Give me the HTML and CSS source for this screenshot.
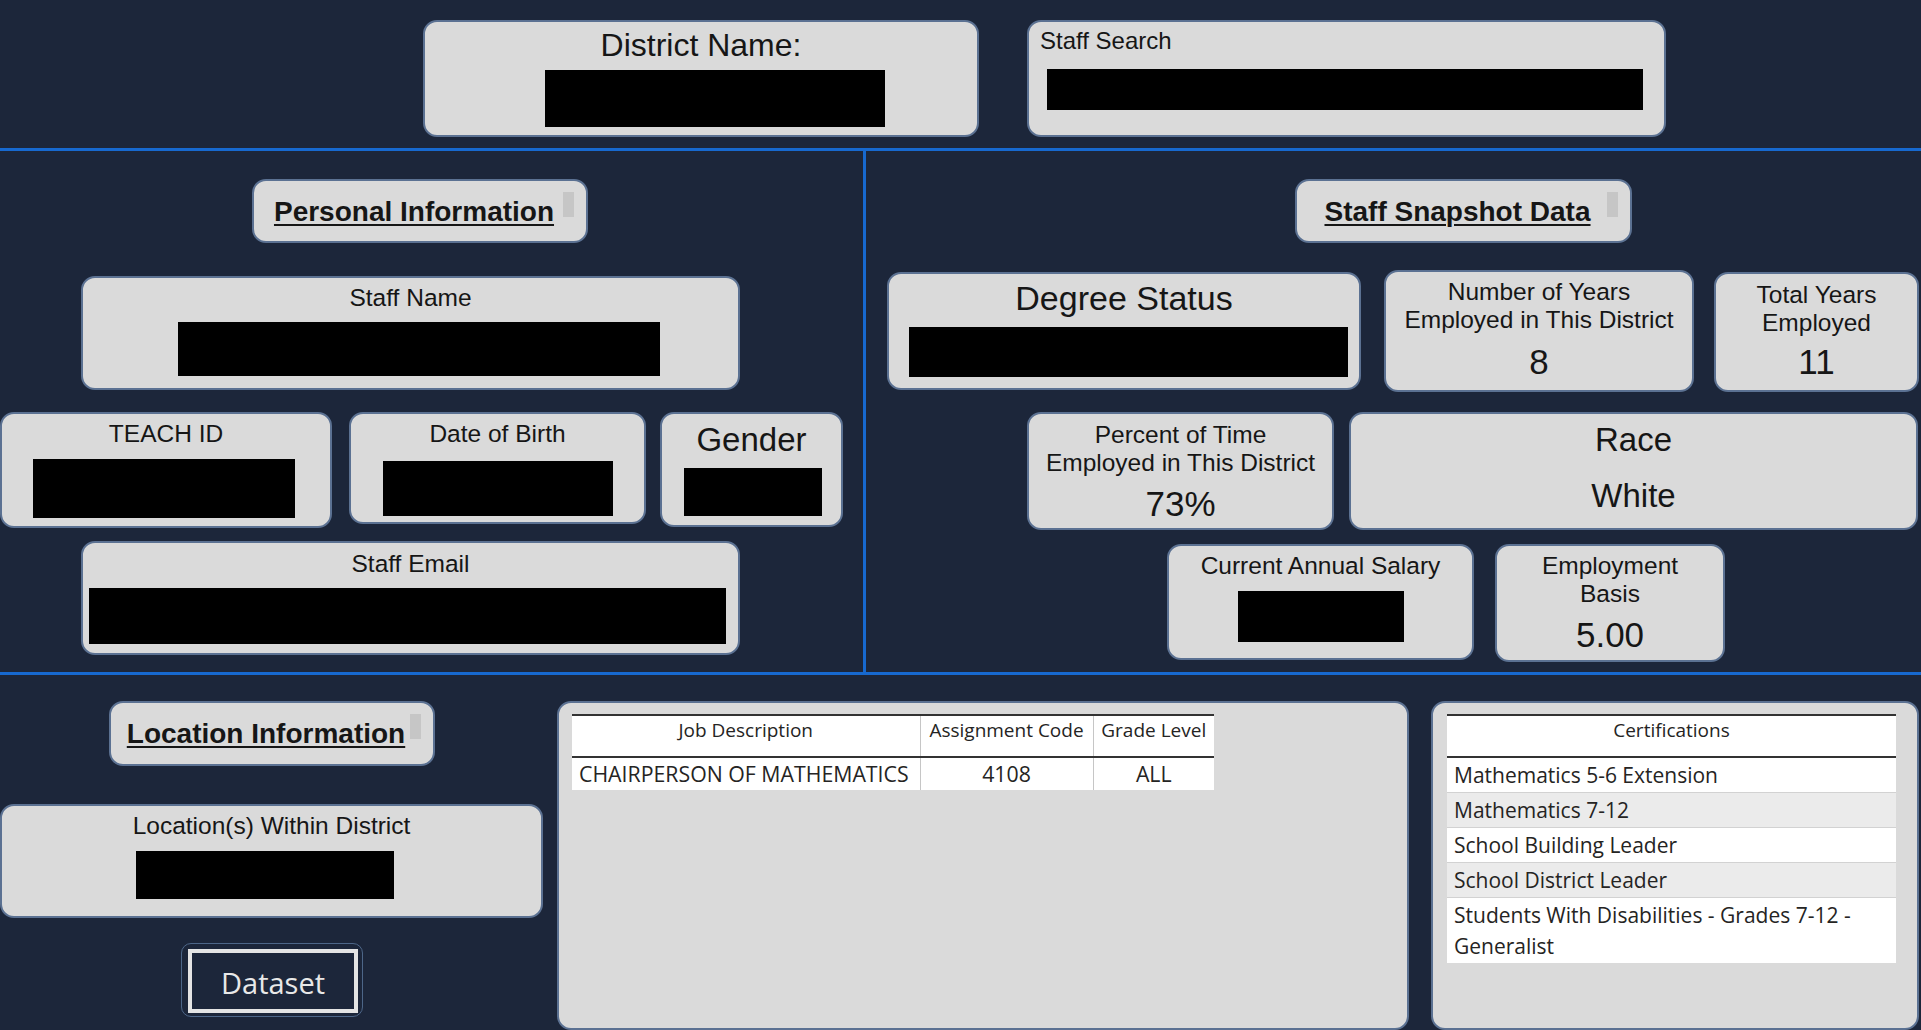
FILE: index.html
```html
<!DOCTYPE html>
<html lang="en">
<head>
<meta charset="utf-8">
<title>Staff Dashboard</title>
<link rel="stylesheet" href="styles.css">
</head>
<body>
<div class="page">
  <header class="top">
    <div class="card district">
      <div class="lbl lbl-district">District Name:</div>
      <div class="red red-district"></div>
    </div>
    <div class="card search">
      <div class="lbl lbl-search">Staff Search</div>
      <div class="red red-search"></div>
    </div>
  </header>
  <div class="hline"></div>
  <main class="middle">
    <section class="mleft">
      <div class="card title title-personal"><span class="title-text">Personal Information</span><span class="sbar"></span></div>
      <div class="card staffname">
        <div class="lbl">Staff Name</div>
        <div class="red red-staffname"></div>
      </div>
      <div class="prow">
        <div class="card teach">
          <div class="lbl">TEACH ID</div>
          <div class="red red-teach"></div>
        </div>
        <div class="card dob">
          <div class="lbl">Date of Birth</div>
          <div class="red red-dob"></div>
        </div>
        <div class="card gender">
          <div class="lbl lbl-lg">Gender</div>
          <div class="red red-gender"></div>
        </div>
      </div>
      <div class="card email">
        <div class="lbl">Staff Email</div>
        <div class="red red-email"></div>
      </div>
    </section>
    <div class="vline"></div>
    <section class="mright">
      <div class="card title title-snapshot"><span class="title-text">Staff Snapshot Data</span><span class="sbar"></span></div>
      <div class="srow srow1">
        <div class="card degree">
          <div class="lbl lbl-degree">Degree Status</div>
          <div class="red red-degree"></div>
        </div>
        <div class="card years">
          <div class="lbl">Number of Years<br>Employed in This District</div>
          <div class="val val-years">8</div>
        </div>
        <div class="card total">
          <div class="lbl">Total Years<br>Employed</div>
          <div class="val val-total">11</div>
        </div>
      </div>
      <div class="srow srow2">
        <div class="card percent">
          <div class="lbl">Percent of Time<br>Employed in This District</div>
          <div class="val val-percent">73%</div>
        </div>
        <div class="card race">
          <div class="lbl lbl-lg">Race</div>
          <div class="lbl lbl-lg race-val">White</div>
        </div>
      </div>
      <div class="srow srow3">
        <div class="card salary">
          <div class="lbl">Current Annual Salary</div>
          <div class="red red-salary"></div>
        </div>
        <div class="card basis">
          <div class="lbl">Employment<br>Basis</div>
          <div class="val val-basis">5.00</div>
        </div>
      </div>
    </section>
  </main>
  <div class="hline"></div>
  <footer class="bottom">
    <section class="bleft">
      <div class="card title title-location"><span class="title-text">Location Information</span><span class="sbar"></span></div>
      <div class="card location">
        <div class="lbl">Location(s) Within District</div>
        <div class="red red-location"></div>
      </div>
      <div class="dataset"><div class="dataset-inner">Dataset</div></div>
    </section>
    <div class="card jobcard">
      <table class="tbl jobtbl">
        <thead>
          <tr><th class="c-job">Job Description</th><th class="c-code">Assignment Code</th><th class="c-grade">Grade Level</th></tr>
        </thead>
        <tbody>
          <tr><td class="left">CHAIRPERSON OF MATHEMATICS</td><td>4108</td><td>ALL</td></tr>
        </tbody>
      </table>
    </div>
    <div class="card certcard">
      <table class="tbl certtbl">
        <thead>
          <tr><th>Certifications</th></tr>
        </thead>
        <tbody>
          <tr><td>Mathematics 5-6 Extension</td></tr>
          <tr class="alt"><td>Mathematics 7-12</td></tr>
          <tr><td>School Building Leader</td></tr>
          <tr class="alt"><td>School District Leader</td></tr>
          <tr><td>Students With Disabilities - Grades 7-12 - Generalist</td></tr>
        </tbody>
      </table>
    </div>
  </footer>
</div>
</body>
</html>
```

FILE: styles.css
```css
* { box-sizing: border-box; }

html, body {
  margin: 0;
  padding: 0;
  background: #1c263a;
  overflow: hidden;
}

.page {
  width: 1921px;
  height: 1030px;
  overflow: hidden;
  background: #1c263a;
  font-family: "Liberation Sans", Arial, sans-serif;
  color: #161616;
}

.card {
  background: #dadada;
  border: 2px solid #5b7192;
  border-radius: 14px;
  flex-shrink: 0;
}

.lbl {
  font-size: 24.5px;
  line-height: 28px;
  text-align: center;
  white-space: nowrap;
}

.lbl-lg { font-size: 33px; line-height: 38px; }

.val {
  font-size: 35px;
  line-height: 40px;
  text-align: center;
}

.red { background: #000; }

.hline { height: 3px; background: #1769cf; }

/* top */
.top {
  height: 148px;
  display: flex;
  align-items: flex-start;
  padding: 20px 0 0 423px;
}
.district { width: 556px; height: 117px; padding-top: 5px; }
.lbl-district { font-size: 32px; line-height: 36px; }
.red-district { width: 340px; height: 57px; margin: 7px 0 0 120px; }

.search { width: 639px; height: 117px; margin-left: 48px; padding-top: 5px; }
.lbl-search { text-align: left; padding-left: 11px; font-size: 24px; }
.red-search { width: 596px; height: 41px; margin: 14px 0 0 18px; }

/* middle */
.middle { display: flex; height: 521px; }
.mleft { width: 863px; flex-shrink: 0; }
.vline { width: 3px; background: #1769cf; flex-shrink: 0; }
.mright { flex: 1; min-width: 0; }

.title {
  position: relative;
  height: 64px;
  padding: 14.5px 12px 0 0;
  text-align: center;
}
.title-text {
  font-size: 28px;
  line-height: 32px;
  font-weight: bold;
  text-decoration: underline;
  text-decoration-thickness: 2px;
  text-underline-offset: 3px;
  white-space: nowrap;
}
.sbar {
  position: absolute;
  top: 11px;
  right: 12px;
  width: 11px;
  height: 25px;
  background: #c6c6c6;
}
.title-personal { width: 336px; margin: 28px 0 0 252px; }
.title-snapshot { width: 337px; margin: 28px 0 0 429px; }
.title-location { width: 326px; height: 65px; margin: 26px 0 0 109px; }

.staffname { width: 659px; height: 114px; margin: 33px 0 0 81px; padding-top: 5.5px; }
.red-staffname { width: 482px; height: 54px; margin: 10.5px 0 0 95px; }

.prow { display: flex; align-items: flex-start; margin-top: 22px; }
.teach { width: 332px; height: 116px; padding-top: 6px; }
.red-teach { width: 262px; height: 59px; margin: 11px 0 0 31px; }
.dob { width: 297px; height: 112px; margin-left: 17px; padding-top: 6px; }
.red-dob { width: 230px; height: 55px; margin: 13px 0 0 32px; }
.gender { width: 183px; height: 115px; margin-left: 14px; padding-top: 6.5px; }
.red-gender { width: 138px; height: 48px; margin: 9.5px 0 0 22px; }

.email { width: 659px; height: 114px; margin: 13px 0 0 81px; padding-top: 7px; }
.red-email { width: 637px; height: 56px; margin: 10px 0 0 6px; }

.srow { display: flex; align-items: flex-start; }
.srow1 { margin-top: 27px; }
.srow2 { margin-top: 20px; }
.srow3 { margin-top: 14px; }

.degree { width: 474px; height: 118px; margin: 2px 0 0 21px; padding-top: 4px; }
.lbl-degree { font-size: 34px; line-height: 40px; }
.red-degree { width: 439px; height: 50px; margin: 9px 0 0 20px; }

.years { width: 310px; height: 122px; margin-left: 23px; padding-top: 5.5px; }
.val-years { margin-top: 8px; }
.total { width: 205px; height: 120px; margin: 2px 0 0 20px; padding-top: 6.5px; }
.val-total { margin-top: 5px; }

.percent { width: 307px; height: 118px; margin-left: 161px; padding-top: 7px; }
.val-percent { margin-top: 6.5px; }
.race { width: 569px; height: 118px; margin-left: 15px; padding-top: 6.5px; }
.race-val { margin-top: 18px; }

.salary { width: 307px; height: 116px; margin-left: 301px; padding-top: 6px; }
.red-salary { width: 166px; height: 51px; margin: 11px 0 0 69px; }
.basis { width: 230px; height: 118px; margin-left: 21px; padding-top: 6px; }
.val-basis { margin-top: 6.5px; }

/* bottom */
.bottom { display: flex; align-items: flex-start; height: 355px; }
.bleft { width: 557px; flex-shrink: 0; }

.location { width: 543px; height: 114px; margin-top: 38px; padding-top: 5.5px; }
.red-location { width: 258px; height: 48px; margin: 11.5px 0 0 134px; }

.dataset {
  width: 182px;
  height: 74px;
  margin: 25px 0 0 181px;
  border: 1px solid #4d6688;
  border-radius: 10px;
  padding: 5px 4px 3px 6px;
}
.dataset-inner {
  height: 100%;
  border: 4px solid #e4e4e4;
  display: flex;
  align-items: center;
  justify-content: center;
  color: #e8e8e8;
  font-family: "Open Sans", "Noto Sans", sans-serif;
  font-size: 29px;
  padding-top: 3px;
}

.jobcard { width: 852px; height: 329px; margin-top: 26px; padding: 11px 0 0 13px; }
.certcard { width: 488px; height: 329px; margin: 26px 0 0 22px; padding: 11px 0 0 14px; }

.tbl {
  border-collapse: collapse;
  background: #fff;
  font-family: "Open Sans", "Noto Sans", sans-serif;
  color: #252423;
}
.tbl th {
  font-weight: normal;
  font-size: 19px;
  line-height: 24px;
  height: 42px;
  padding: 2px 4px 0;
  vertical-align: top;
  text-align: center;
  border-top: 2px solid #333;
  border-bottom: 2px solid #333;
  white-space: nowrap;
}
.jobtbl { width: 642px; }
.jobtbl th + th, .jobtbl td + td { border-left: 1px solid #c6c6c6; }
.c-job { width: 348px; }
.c-code { width: 173px; }
.c-grade { width: 121px; }
.jobtbl td {
  font-size: 21.3px;
  line-height: 32px;
  height: 33px;
  padding: 0 4px;
  text-align: center;
  white-space: nowrap;
}
.jobtbl td.left { text-align: left; padding-left: 7px; }

.certtbl { width: 449px; }
.certtbl td {
  font-size: 21px;
  line-height: 31px;
  padding: 2px 8px 1px 7px;
  vertical-align: top;
  border-bottom: 1px solid #d2d2d2;
}
.certtbl tr.alt td { background: #ebebeb; }
.certtbl tr:last-child td { border-bottom: none; }
```
